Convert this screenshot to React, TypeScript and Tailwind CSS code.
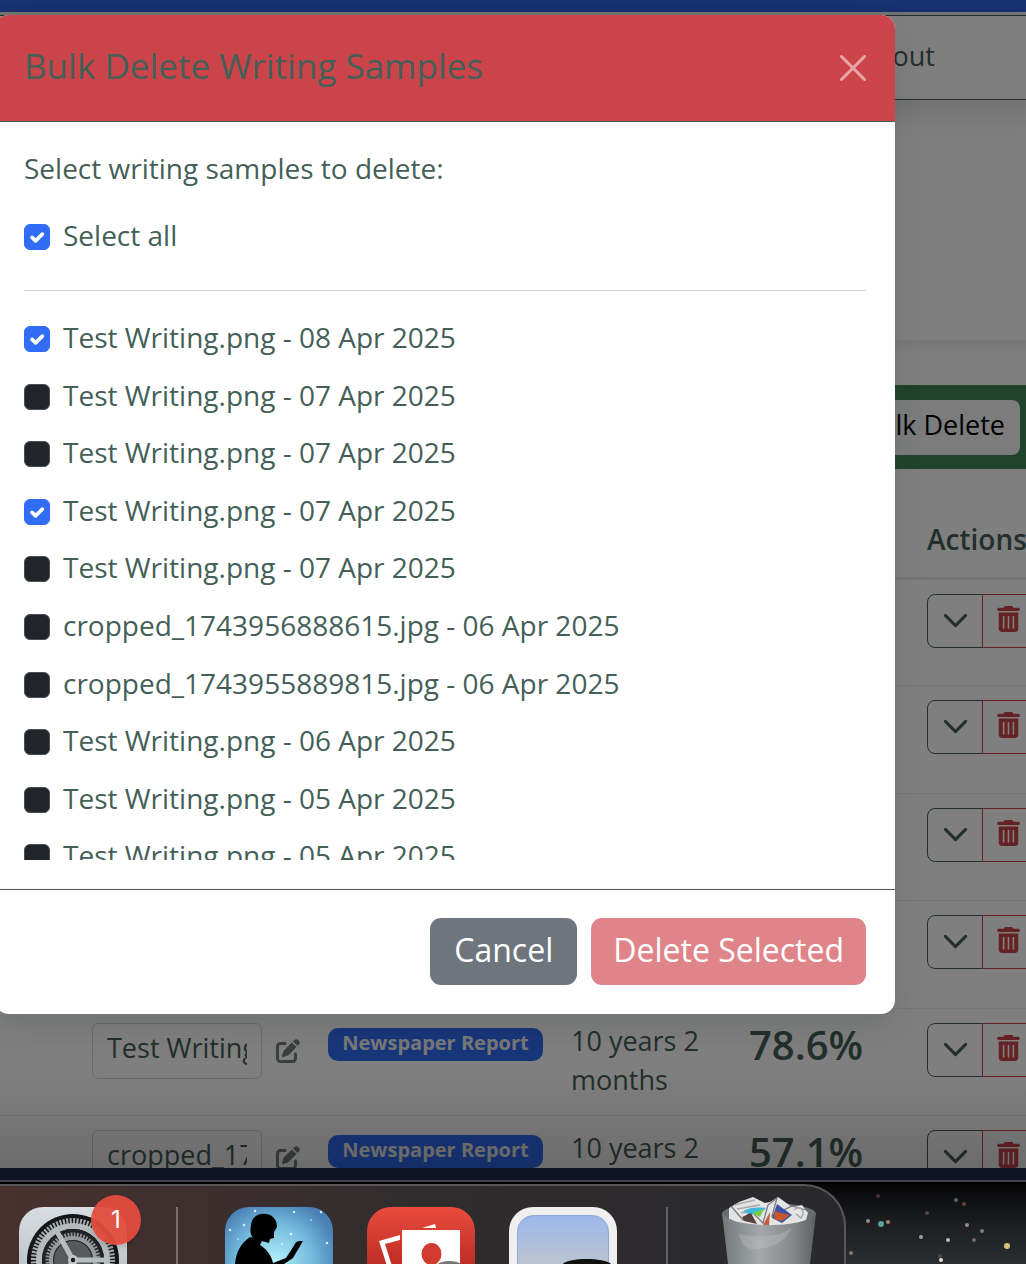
import { useState } from "react";
import { FaPenToSquare, FaTrashCan } from "react-icons/fa6";

const samples = [
  { name: "Test Writing.png - 08 Apr 2025", checked: true },
  { name: "Test Writing.png - 07 Apr 2025", checked: false },
  { name: "Test Writing.png - 07 Apr 2025", checked: false },
  { name: "Test Writing.png - 07 Apr 2025", checked: true },
  { name: "Test Writing.png - 07 Apr 2025", checked: false },
  { name: "cropped_1743956888615.jpg - 06 Apr 2025", checked: false },
  { name: "cropped_1743955889815.jpg - 06 Apr 2025", checked: false },
  { name: "Test Writing.png - 06 Apr 2025", checked: false },
  { name: "Test Writing.png - 05 Apr 2025", checked: false },
  { name: "Test Writing.png - 05 Apr 2025", checked: false },
];

type Row = { file?: string; score?: string };

const rows: Row[] = [
  {},
  {},
  {},
  {},
  { file: "Test Writing.png", score: "78.6%" },
  { file: "cropped_1743956888615.jpg", score: "57.1%" },
];

function CheckRow({ id, label, initial }: { id: string; label: string; initial: boolean }) {
  const [checked, setChecked] = useState(initial);
  return (
    <div className="flex h-9 items-start gap-[13px]">
      <span className="relative mt-[6px] block size-[26px] shrink-0">
        <input
          id={id}
          type="checkbox"
          checked={checked}
          onChange={(e) => setChecked(e.target.checked)}
          className="peer block size-[26px] appearance-none rounded-md border border-[#495057] bg-[#212529] checked:border-[#316cf4] checked:bg-[#316cf4]"
        />
        <svg
          viewBox="0 0 20 20"
          className="pointer-events-none absolute inset-0 hidden size-[26px] peer-checked:block"
          fill="none"
          stroke="#fff"
          strokeWidth="2.8"
          strokeLinecap="round"
          strokeLinejoin="round"
        >
          <path d="m6.200 10.300 2.700 2.700 5.200-5.200" />
        </svg>
      </span>
      <label htmlFor={id} className="whitespace-nowrap leading-[34px]">
        {label}
      </label>
    </div>
  );
}

function DeleteModal() {
  return (
    <div
      role="dialog"
      aria-labelledby="modal-title"
      className="absolute top-[15px] right-[131px] -left-[5px] overflow-hidden rounded-[14px] bg-white text-[#445f58] shadow-[0_14px_30px_rgba(0,30,20,0.12)]"
    >
      <header className="flex h-[107px] items-center justify-between border-b border-[#445f58] bg-[#cb444a] px-[29px]">
        <h2 id="modal-title" className="pb-1 text-[35px] leading-[50px] font-medium whitespace-nowrap">
          Bulk Delete Writing Samples
        </h2>
        <button type="button" aria-label="Close" className="text-[#e9a5a8]">
          <svg width="26" height="26" viewBox="0 0 26 26" stroke="currentColor" strokeWidth="3" strokeLinecap="round">
            <path d="M1.5 1.5l23 23M24.5 1.5l-23 23" />
          </svg>
        </button>
      </header>
      <div className="p-[29px] text-[28px]">
        <p className="leading-[34px]">Select writing samples to delete:</p>
        <div className="mt-[33px]">
          <CheckRow id="select-all" label="Select all" initial={true} />
        </div>
        <hr className="mt-9 border-[#d0d0d0]" />
        <ul className="mt-[29px] h-[540px] overflow-hidden">
          {samples.map((s, i) => (
            <li key={i} className="h-[58px] nth-[5n+2]:h-[57px] nth-[5n+4]:h-[57px]">
              <CheckRow id={`sample-${i}`} label={s.name} initial={s.checked} />
            </li>
          ))}
        </ul>
      </div>
      <footer className="flex justify-end gap-[14px] border-t border-[#4b5552] px-[29px] pt-7 pb-[29px] text-[32px] text-white">
        <button type="button" className="h-[67px] rounded-[11px] bg-[#6e757c] px-6 pb-1">
          Cancel
        </button>
        <button type="button" className="h-[67px] rounded-[11px] bg-[#df8589] px-[22px] pb-1">
          Delete Selected
        </button>
      </footer>
    </div>
  );
}

function SamplesTable() {
  return (
    <table className="w-full min-w-[1100px] table-fixed border-collapse text-left">
      <colgroup>
        <col className="w-[78px]" />
        <col className="w-[236px]" />
        <col className="w-[243px]" />
        <col className="w-[178px]" />
        <col className="w-[178px]" />
        <col />
      </colgroup>
      <thead>
        <tr className="h-[109px] border-b-3 border-[#e8e8e8]">
          <th colSpan={5} />
          <th className="px-[14px] pt-8 text-[28px] font-semibold">Actions</th>
        </tr>
      </thead>
      <tbody>
        {rows.map((r, i) => (
          <tr key={i} className="h-[108px] border-b border-[#eaeaea] align-top odd:h-[107px]">
            <td />
            <td className="px-[14px] pt-[14px]">
              {r.file && (
                <div className="flex items-center gap-[14px]">
                  <input
                    aria-label="File name"
                    defaultValue={r.file}
                    className="h-14 w-[170px] rounded-md border border-[#d8d8d8] px-[14px] pb-[6px] text-[27px]"
                  />
                  <FaPenToSquare className="size-6 shrink-0 text-[#747f7b]" />
                </div>
              )}
            </td>
            <td className="px-[14px] pt-[19px]">
              {r.file && (
                <span className="flex h-[33px] items-center justify-center rounded-[10px] bg-[#316cf4] pb-[2px] text-xl font-bold whitespace-nowrap text-[#f0f0f0]">
                  Newspaper Report
                </span>
              )}
            </td>
            <td className="px-[14px] pt-3 text-[27px] leading-[39px]">{r.file && "10 years 2 months"}</td>
            <td className="px-[14px] pt-3 text-[40px] leading-[48px] font-semibold">{r.score}</td>
            <td className="px-[14px] pt-[14px]">
              <div className="flex">
                <button
                  type="button"
                  aria-label="Show details"
                  className="flex h-[54px] w-14 items-center justify-center rounded-l-lg border border-[#445f58]"
                >
                  <svg width="27" height="27" viewBox="0 0 16 16" fill="none" stroke="currentColor" strokeWidth="1.8" strokeLinecap="round" strokeLinejoin="round">
                    <path d="m2 5 6 6 6-6" />
                  </svg>
                </button>
                <button
                  type="button"
                  aria-label="Delete"
                  className="-ml-px flex h-[54px] w-[52px] items-center justify-center rounded-r-lg border border-[#cb444a] pb-1 text-[#cb444a]"
                >
                  <FaTrashCan className="h-[26px] w-[23px]" />
                </button>
              </div>
            </td>
          </tr>
        ))}
      </tbody>
    </table>
  );
}

function SettingsIcon() {
  return (
    <div className="relative">
      <svg className="block" width="108" height="57" viewBox="0 0 108 57">
        <defs>
          <linearGradient id="set" x1="0" y1="0" x2="0" y2="1">
            <stop offset="0" stopColor="#d8dde1" />
            <stop offset="1" stopColor="#aab3b3" />
          </linearGradient>
        </defs>
        <rect width="108" height="108" rx="24" fill="url(#set)" />
        <circle cx="54" cy="53" r="46" fill="#141617" />
        <circle cx="54" cy="53" r="39" fill="none" stroke="#a5abad" strokeWidth="6" strokeDasharray="2 1.4" />
        <circle cx="54" cy="53" r="34" fill="none" stroke="#b5bbbd" strokeWidth="6" />
        <circle cx="54" cy="53" r="31" fill="#202223" />
        <circle cx="54" cy="53" r="25" fill="none" stroke="#8c9193" strokeWidth="5" strokeDasharray="1.8 1.3" />
        <circle cx="54" cy="53" r="22" fill="none" stroke="#969b9c" strokeWidth="4" />
        <circle cx="54" cy="53" r="19" fill="#565a5b" />
        <path d="M54 53 36 21M54 53H88M54 53 36 85" stroke="#b7bdbf" strokeWidth="5" />
        <circle cx="54" cy="53" r="5" fill="#c1c6c7" />
        <circle cx="54" cy="53" r="2.2" fill="#17191a" />
      </svg>
      <span className="absolute -top-3 -right-[14px] flex size-[50px] items-center justify-center rounded-full bg-[#e24c3d]/95 font-['Inter'] text-2xl text-white shadow-md">
        1
      </span>
    </div>
  );
}

function ReaderIcon() {
  return (
    <svg width="108" height="57" viewBox="0 0 108 57">
      <defs>
        <radialGradient id="glow" gradientUnits="userSpaceOnUse" cx="50" cy="55" r="64">
          <stop offset="0" stopColor="#b4f1fb" />
          <stop offset="0.6" stopColor="#72b9dc" />
          <stop offset="1" stopColor="#4a80b5" />
        </radialGradient>
      </defs>
      <rect width="108" height="108" rx="24" fill="url(#glow)" />
      <g fill="#d9f3fb">
        <circle cx="30" cy="4" r="1.2" />
        <circle cx="69" cy="5" r="1.2" />
        <circle cx="96" cy="5" r="1.2" />
        <circle cx="5" cy="23" r="1.3" />
        <circle cx="19" cy="18" r="1.3" />
        <circle cx="66" cy="27" r="1.3" />
        <circle cx="102" cy="36" r="1.3" />
        <circle cx="86" cy="13" r="0.8" />
        <circle cx="13" cy="32" r="0.8" />
        <circle cx="57" cy="37" r="0.9" />
      </g>
      <path
        d="M26 18C27 9 34 6 41 7c8 1 11 7 11 13l-3 5v6l-4 1-1 4-7-2-2 4c6 4 11 9 13 18l13-5 9-14c1-3 4-3 8-3L68 51l-9 6H10c1-12 6-21 15-27l3 1c-3-4-3-8-2-13Z"
        fill="#000"
      />
    </svg>
  );
}

function PhotosIcon() {
  return (
    <svg width="108" height="57" viewBox="0 0 108 57">
      <defs>
        <linearGradient id="red" x1="0" y1="0" x2="0" y2="1">
          <stop offset="0" stopColor="#e84c3d" />
          <stop offset="0.55" stopColor="#bd2c24" />
        </linearGradient>
      </defs>
      <rect width="108" height="108" rx="24" fill="url(#red)" />
      <path d="M55 21 68 17l1 4ZM12 34l21-6v5l-15 4 7 22h-5Z" fill="#fff" />
      <path d="M35 23h58v40H35Z" fill="#fff" />
      <ellipse cx="64.500" cy="47" rx="10" ry="11" fill="#d33a2f" />
      <path d="M68 60c3-8 26-8 29 0Z" fill="#777" />
    </svg>
  );
}

function PreviewIcon() {
  return (
    <svg width="108" height="57" viewBox="0 0 108 57">
      <defs>
        <linearGradient id="prev" x1="0" y1="0" x2="0" y2="1">
          <stop offset="0" stopColor="#9cb8ea" />
          <stop offset="0.5" stopColor="#b9c3d2" />
        </linearGradient>
      </defs>
      <rect width="108" height="108" rx="24" fill="#efefef" />
      <rect x="8.500" y="8.500" width="91" height="91" rx="16" fill="url(#prev)" stroke="#8ea8d8" />
      <path d="M53 58c4-8 45-8 50 0Z" fill="#111" />
    </svg>
  );
}

function TrashIcon() {
  return (
    <svg width="96" height="68" viewBox="0 0 96 68">
      <defs>
        <linearGradient id="can" x1="0" y1="0" x2="1" y2="0">
          <stop offset="0" stopColor="#70767a" />
          <stop offset="0.4" stopColor="#a4a8ab" />
          <stop offset="0.75" stopColor="#85898c" />
          <stop offset="1" stopColor="#5c6063" />
        </linearGradient>
      </defs>
      <ellipse cx="48" cy="18" rx="47" ry="11" fill="#696d70" />
      <path d="M8 12 18 6 32 1l12 6 5-1 8-5 14 10 10-2 6 8-3 10-24 5-36 1-16-8Z" fill="#e4e4e4" />
      <path d="m10 10 12 14 8-9 12 12 5-18 9-7-5 18 20-10 14 4" fill="none" stroke="#777" strokeWidth="1.2" />
      <path d="m13 9 21-5M16 13l23-4M20 17l11-2M73 14c6-6 12 1 7 8l-5-4" fill="none" stroke="#a8a8a8" strokeWidth="1.5" />
      <path d="M22 15c8-4 14-4 23-3l-5 5-11 2Z" fill="#3fb8dd" />
      <path d="m31 17 12-4-4 8Z" fill="#79cc41" />
      <path d="m56 8 15 11-10 8-10-5Z" fill="#3c52a0" />
      <path d="m54 15 6 2 9 2-8 6-8-2Z" fill="#c75828" />
      <path d="m42 29 7-13-1 13Z" fill="#c4583b" />
      <path d="m21 21 9-4 6 11-13-3Z" fill="#57403e" />
      <path d="M1 17c6 9 27 12 47 12s41-3 47-12l-6 51H7Z" fill="url(#can)" />
      <path d="M18 38c20 5 42 2 52-6-5 14-20 21-38 21-8 0-12-6-14-15Z" fill="#c4c7c9" opacity="0.35" />
    </svg>
  );
}

const stars = [
  [54, 57, 2, "#889"], [67, 60, 3, "#5d9ea6"], [74, 58, 2, "#987"], [107, 73, 2, "#a99"],
  [127, 96, 2, "#ddc"], [134, 76, 2, "#bbb"], [153, 61, 2, "#988"], [168, 67, 2, "#877"],
  [193, 82, 3, "#d8c27a"], [142, 36, 2, "#566"], [150, 40, 2, "#643"], [37, 89, 2, "#876"],
  [160, 76, 2, "#767"], [113, 49, 2, "#544"], [126, 92, 2, "#544"], [64, 32, 2, "#433"],
] as const;

function Dock() {
  return (
    <div className="relative flex h-20 overflow-hidden bg-black">
      <svg className="absolute right-0 bottom-0" width="212" height="80" viewBox="0 0 212 80">
        <defs>
          <linearGradient id="night" x1="0" y1="0" x2="0" y2="1">
            <stop offset="0" stopColor="#060607" />
            <stop offset="0.5" stopColor="#1c1e20" />
            <stop offset="1" stopColor="#2b2e31" />
          </linearGradient>
        </defs>
        <rect width="212" height="80" fill="url(#night)" />
        {stars.map(([x, y, r, c], i) => (
          <circle key={i} cx={x} cy={y - 20} r={r} fill={c} />
        ))}
      </svg>
      <div className="relative mr-[180px] flex h-32 flex-1 items-start rounded-tr-[42px] border-t-2 border-r-2 border-[#5a5657] bg-linear-to-r from-[#48312f] via-[#302c2d] to-[#29292c] pt-[21px] pl-[19px]">
        <SettingsIcon />
        <i className="mr-[47px] ml-[49px] h-20 w-[2px] bg-[#7b6c6b]" />
        <div className="flex gap-[34px]">
          <ReaderIcon />
          <PhotosIcon />
          <PreviewIcon />
        </div>
        <i className="mr-[53px] ml-[49px] h-20 w-[2px] bg-[#606062]" />
        <div className="-mt-[11px]">
          <TrashIcon />
        </div>
      </div>
    </div>
  );
}

export default function App() {
  return (
    <div className="flex h-screen flex-col overflow-hidden bg-black font-['Open_Sans',sans-serif] text-[#445f58]">
      <main className="relative min-h-0 flex-1 overflow-hidden bg-white">
        <div className="h-3 bg-[#316bf0]" />
        <nav className="mt-[3px] flex h-[85px] items-center justify-end border-y border-[#445f58] pr-[91px] pb-[2px] text-[27px] shadow-[0_0_28px_14px_rgba(0,0,0,0.12)]">
          <a href="#about">About</a>
        </nav>
        <section className="h-[240px] shadow-[0_4px_8px_4px_rgba(0,0,0,0.06)]" />
        <section className="mt-[45px]">
          <div className="flex h-[84px] items-center justify-end bg-[#42845a] pr-[6px]">
            <button type="button" className="h-[55px] rounded-lg bg-[#f8f9fa] px-[15px] pb-1 text-[27px] text-black">
              Bulk Delete
            </button>
          </div>
          <SamplesTable />
        </section>
        <div className="absolute inset-0 bg-black/50" />
        <div className="absolute inset-x-0 bottom-0 h-24 bg-linear-to-b from-transparent to-black/15" />
        <DeleteModal />
      </main>
      <footer className="shrink-0">
        <div className="h-[14px] border-b-2 border-[#44444f] bg-[#0d1322]" />
        <div className="h-[2px] bg-black" />
        <Dock />
      </footer>
    </div>
  );
}
